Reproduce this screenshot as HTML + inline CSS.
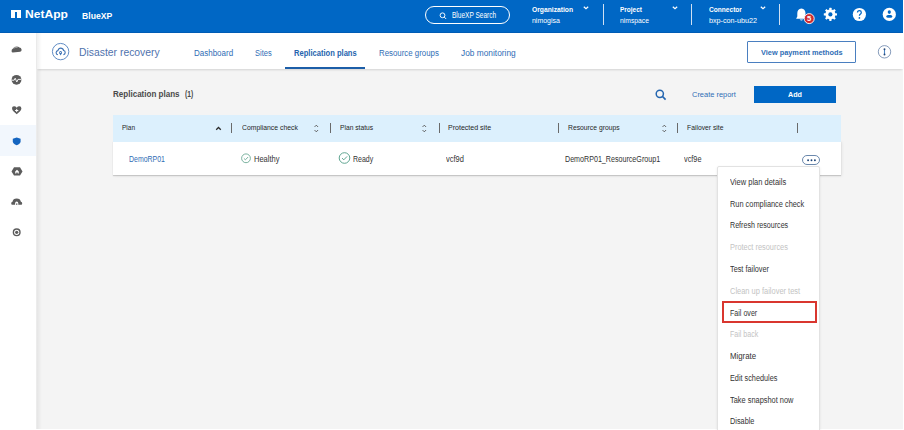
<!DOCTYPE html>
<html><head><meta charset="utf-8">
<style>
*{box-sizing:border-box;margin:0;padding:0}
html,body{width:904px;height:430px;overflow:hidden;background:#f4f4f4;font-family:"Liberation Sans",sans-serif;color:#333}
.a{position:absolute}
.t{position:absolute;white-space:nowrap;line-height:1;transform-origin:0 0}
.r{}
</style></head><body>
<!-- header -->
<div class="a" style="left:0;top:0;width:903px;height:33px;background:#0067c5;border-bottom:1px solid #005cb5"></div>
<div class="a" style="left:903px;top:0;width:1px;height:430px;background:#fff"></div>
<!-- logo -->
<div class="a" style="left:11px;top:10px;width:10px;height:8px;background:#fff"></div>
<div class="a" style="left:14.7px;top:12.4px;width:2.5px;height:6px;background:#0067c5"></div>
<!-- search pill -->
<div class="a" style="left:425px;top:6px;width:85px;height:18px;border:1px solid #fff;border-radius:9px"></div>
<svg class="a" style="left:439px;top:12px" width="9" height="9" viewBox="0 0 9 9"><circle cx="3.5" cy="3.3" r="2.4" fill="none" stroke="#fff" stroke-width="0.95"/><path d="M5.2 5 L7.2 7" stroke="#fff" stroke-width="0.95"/></svg>
<!-- chevrons/dividers -->
<svg class="a" style="left:583px;top:6px" width="6" height="4" viewBox="0 0 6 4"><path d="M0.8 0.8 L3 2.8 L5.2 0.8" fill="none" stroke="#fff" stroke-width="1.2"/></svg>
<div class="a" style="left:603px;top:4px;width:1px;height:21px;background:#cfe0f3"></div>
<svg class="a" style="left:672px;top:6px" width="6" height="4" viewBox="0 0 6 4"><path d="M0.8 0.8 L3 2.8 L5.2 0.8" fill="none" stroke="#fff" stroke-width="1.2"/></svg>
<div class="a" style="left:691px;top:4px;width:1px;height:21px;background:#cfe0f3"></div>
<svg class="a" style="left:760px;top:6px" width="6" height="4" viewBox="0 0 6 4"><path d="M0.8 0.8 L3 2.8 L5.2 0.8" fill="none" stroke="#fff" stroke-width="1.2"/></svg>
<div class="a" style="left:779px;top:4px;width:1px;height:21px;background:#cfe0f3"></div>
<!-- bell -->
<svg class="a" style="left:795px;top:7px" width="21" height="18" viewBox="0 0 21 18">
<path d="M6.4 1.4 C3.6 1.4 2.3 3.6 2.3 6.2 L2.3 9.4 L1.1 11.8 L11.7 11.8 L10.5 9.4 L10.5 6.2 C10.5 3.6 9.2 1.4 6.4 1.4 Z" fill="#fff"/>
<path d="M4.6 12.4 Q6.4 14.6 8.2 12.4 Z" fill="#fff"/>
<circle cx="14.2" cy="11.6" r="5" fill="#cf2b2f" stroke="#fff" stroke-width="0.9"/>
<text x="14.2" y="14.4" font-size="7.6" font-weight="bold" fill="#fff" text-anchor="middle" font-family="Liberation Sans">5</text>
</svg>
<!-- gear -->
<svg class="a" style="left:822px;top:6px" width="17" height="17" viewBox="0 0 17 17">
<g fill="#fff" transform="translate(8.4 8.4)">
<circle r="5"/>
<rect x="-1.15" y="-6.6" width="2.3" height="13.2" rx="0.4"/>
<rect x="-1.15" y="-6.6" width="2.3" height="13.2" rx="0.4" transform="rotate(45)"/>
<rect x="-1.15" y="-6.6" width="2.3" height="13.2" rx="0.4" transform="rotate(90)"/>
<rect x="-1.15" y="-6.6" width="2.3" height="13.2" rx="0.4" transform="rotate(135)"/>
<circle r="2.1" fill="#0067c5"/>
</g>
</svg>
<!-- help -->
<svg class="a" style="left:852px;top:7px" width="15" height="15" viewBox="0 0 15 15">
<circle cx="7.4" cy="7.5" r="6.6" fill="#fff"/>
<path d="M5.5 5.6 Q5.5 3.6 7.4 3.6 Q9.3 3.6 9.3 5.4 Q9.3 6.5 8.3 7.1 Q7.4 7.6 7.4 8.8" fill="none" stroke="#0067c5" stroke-width="1.25"/>
<circle cx="7.4" cy="10.9" r="0.85" fill="#0067c5"/>
</svg>
<!-- user -->
<svg class="a" style="left:882px;top:7px" width="15" height="15" viewBox="0 0 15 15">
<circle cx="7.3" cy="7.4" r="6.6" fill="#fff"/>
<ellipse cx="7.3" cy="5.1" rx="1.6" ry="1.8" fill="#0067c5"/>
<path d="M4.3 9.6 Q4.3 8 6 8 L8.6 8 Q10.3 8 10.3 9.6 Q10.3 10.8 8.6 10.8 L6 10.8 Q4.3 10.8 4.3 9.6 Z" fill="#0067c5"/>
</svg>

<!-- sidebar -->
<div class="a" style="left:0;top:33px;width:37px;height:397px;background:#fff;border-right:1px solid #ececec"></div>
<div class="a" style="left:0;top:125px;width:36px;height:31px;background:#f2f7fd"></div>

<!-- subheader -->
<div class="a" style="left:37px;top:33px;width:866px;height:36px;background:#fff;box-shadow:0 2px 2px -1px rgba(0,0,0,.14)"></div>
<svg class="a" style="left:48px;top:40px" width="25" height="24" viewBox="0 0 25 24">
<circle cx="12.6" cy="11.6" r="8.2" fill="none" stroke="#4f7fbd" stroke-width="0.9"/>
<path d="M9.9 14.8 Q8 14.4 8.1 12.5 Q8.3 10.8 9.9 10.6 Q10.6 8.1 12.7 8.1 Q15 8.1 15.6 10.5 Q17.3 10.8 17.2 12.6 Q17.1 14.3 15.4 14.8" fill="none" stroke="#3f73b5" stroke-width="1.1"/>
<path d="M12.6 15.6 L11.3 13.2 A1.45 1.45 0 1 1 13.9 13.2 Z" fill="#3f73b5"/>
<circle cx="12.6" cy="12.5" r="0.6" fill="#fff"/>
</svg>
<div class="a" style="left:285px;top:67px;width:80px;height:2px;background:#1c5ea8"></div>
<div class="a" style="left:747px;top:41px;width:109px;height:22px;border:1px solid #4a7fc0;border-radius:1px"></div>
<svg class="a" style="left:877px;top:44px" width="15" height="15" viewBox="0 0 15 15">
<circle cx="7.5" cy="7.8" r="6.2" fill="none" stroke="#6f89ad" stroke-width="0.85"/>
<path d="M7.5 5.3 L7.5 10.4" stroke="#4d86c6" stroke-width="1.1"/>
<circle cx="7.5" cy="5.2" r="0.95" fill="#25487a"/><circle cx="7.5" cy="10.5" r="0.95" fill="#25487a"/>
</svg>

<div class="a" style="left:37px;top:33px;width:5px;height:396px;background:linear-gradient(to right,rgba(0,0,0,.06),rgba(0,0,0,0))"></div>
<div class="a" style="left:0;top:429px;width:904px;height:1px;background:#fff"></div>
<!-- sidebar icons -->
<svg class="a" style="left:0;top:0" width="36" height="250" viewBox="0 0 36 250">
<g fill="#5c5c5c">
<path d="M11.6 51.6 Q11.2 49.6 13 48.6 Q14 46.6 16.6 46.6 Q18.4 46.6 19.4 47.6 Q21.2 47.8 21.6 49.4 Q21.8 51.2 20.2 51.8 L12.8 52.6 Q11.8 52.6 11.6 51.6 Z"/>
<path d="M13.6 48.2 Q15.6 46.9 17.6 47.3" fill="none" stroke="#fff" stroke-width="0.5"/>
<circle cx="16.5" cy="79.8" r="4.9"/>
<path d="M12 108 Q12.1 106.4 13.9 106.3 Q15.6 106.2 16.7 107.7 Q17.8 106.2 19.5 106.3 Q21.3 106.4 21.4 108.4 Q21.4 110 19.8 111.5 L16.7 114.3 L13.6 111.5 Q12 110 12 108 Z"/>
<path d="M16.6 2 L21.5 3.6 L21.5 7 Q21.5 10.8 16.6 12.6 Q11.7 10.8 11.7 7 L11.7 3.6 Z" fill="#1565c0" transform="translate(0.2 0) scale(1 1)" style="display:none"/>
<path d="M14 167.2 L20 167.2 L22.5 171.4 L20 175.6 L14 175.6 L11.5 171.4 Z"/>
<path d="M12.2 204.8 Q11.2 204.8 11.2 203.3 Q11.2 201.9 12.5 201.8 Q12.9 198.4 16.7 198.4 Q20.4 198.4 20.9 201.8 Q22.2 201.9 22.2 203.3 Q22.2 204.8 21.2 204.8 Z"/>
<circle cx="16.7" cy="232.3" r="3.3" fill="none" stroke="#5c5c5c" stroke-width="1.4"/>
<circle cx="16.7" cy="232.3" r="1.6"/>
</g>
<path d="M11.8 80.2 L14.2 80.2 L15.2 78.2 L16.8 82 L18 79.4 L21.2 79.4" fill="none" stroke="#fff" stroke-width="0.9"/>
<path d="M16.7 108.9 L16.7 112.1 M15.1 110.5 L18.3 110.5" stroke="#fff" stroke-width="1"/>
<path d="M16.7 137.4 L20.6 138.7 L20.6 141.2 Q20.6 143.9 16.7 145.3 Q12.8 143.9 12.8 141.2 L12.8 138.7 Z" fill="#1565c0"/>
<path d="M15.2 173.6 L15.2 171.4 L17 169.8 L18.8 171.4 L18.8 173.6 L17.7 173.6 L17.7 172.4 L16.3 172.4 L16.3 173.6 Z" fill="#fff"/>
<path d="M15.1 205.2 L15.1 203.2 Q15.1 201.6 16.7 201.6 Q18.3 201.6 18.3 203.2 L18.3 205.2 L17.4 205.2 L17.4 203.4 L16 203.4 L16 205.2 Z" fill="#fff"/>
</svg>
<!-- content -->
<svg class="a" style="left:655px;top:89px" width="12" height="12" viewBox="0 0 12 12">
<circle cx="4.8" cy="4.8" r="3.6" fill="none" stroke="#2466b0" stroke-width="1.5"/>
<path d="M7.4 7.4 L10.6 10.6" stroke="#2466b0" stroke-width="1.6"/>
</svg>
<div class="a" style="left:754px;top:86px;width:82px;height:17px;background:#0067c5"></div>

<!-- table -->
<div class="a" style="left:113px;top:141px;width:728px;height:34px;background:#fff;box-shadow:0 1px 1px rgba(0,0,0,.15),1px 1px 3px rgba(0,0,0,.07)"></div>
<div class="a" style="left:113px;top:115px;width:728px;height:27px;background:#dcf0fd"></div>
<svg class="a" style="left:215px;top:126px" width="7" height="5" viewBox="0 0 7 5"><path d="M1.2 3.7 L3.5 1.5 L5.8 3.7" fill="none" stroke="#2a2a2a" stroke-width="1.3"/></svg>
<div class="a" style="left:231px;top:123px;width:1px;height:10px;background:#6a6a6a"></div>
<svg class="a" style="left:314px;top:124px" width="5" height="9" viewBox="0 0 5 9"><path d="M0.6 2.9 L2.3 1.2 L4 2.9 M0.6 6.1 L2.3 7.8 L4 6.1" fill="none" stroke="#5a5a5a" stroke-width="1"/></svg>
<div class="a" style="left:330px;top:123px;width:1px;height:10px;background:#6a6a6a"></div>
<svg class="a" style="left:422px;top:124px" width="5" height="9" viewBox="0 0 5 9"><path d="M0.6 2.9 L2.3 1.2 L4 2.9 M0.6 6.1 L2.3 7.8 L4 6.1" fill="none" stroke="#5a5a5a" stroke-width="1"/></svg>
<div class="a" style="left:439px;top:123px;width:1px;height:10px;background:#6a6a6a"></div>
<div class="a" style="left:558px;top:123px;width:1px;height:10px;background:#6a6a6a"></div>
<svg class="a" style="left:662px;top:124px" width="5" height="9" viewBox="0 0 5 9"><path d="M0.6 2.9 L2.3 1.2 L4 2.9 M0.6 6.1 L2.3 7.8 L4 6.1" fill="none" stroke="#5a5a5a" stroke-width="1"/></svg>
<div class="a" style="left:677px;top:123px;width:1px;height:10px;background:#6a6a6a"></div>
<div class="a" style="left:797px;top:123px;width:1px;height:10px;background:#6a6a6a"></div>

<svg class="a" style="left:240px;top:152px" width="12" height="12" viewBox="0 0 12 12"><circle cx="6" cy="6.3" r="4.4" fill="none" stroke="#5a9f88" stroke-width="0.8"/><path d="M3.9 6.4 L5.4 7.8 L8.1 5" fill="none" stroke="#5a9f88" stroke-width="0.8"/></svg>
<svg class="a" style="left:338px;top:151px" width="13" height="13" viewBox="0 0 13 13"><circle cx="6.5" cy="7" r="5.3" fill="none" stroke="#4f9c86" stroke-width="0.9"/><path d="M4 7.1 L5.8 8.8 L9.1 5.4" fill="none" stroke="#4f9c86" stroke-width="0.9"/></svg>
<svg class="a" style="left:801px;top:154px" width="20" height="12" viewBox="0 0 20 12">
<rect x="1.5" y="1.5" width="17" height="9" rx="4.5" fill="#fff" stroke="#5a7aa3" stroke-width="0.9"/>
<circle cx="7.1" cy="6.2" r="0.95" fill="#1d4478"/><circle cx="10.5" cy="6.2" r="0.95" fill="#1d4478"/><circle cx="13.9" cy="6.2" r="0.95" fill="#1d4478"/>
</svg>
<!-- menu -->
<div class="a" style="left:717px;top:166px;width:103px;height:270px;background:#fff;border:1px solid #e2e2e2;border-radius:2px;box-shadow:0 1px 3px rgba(0,0,0,.08)"></div>
<div class="a" style="left:722px;top:301px;width:95px;height:22px;border:2px solid #d9362f"></div>
<div class="t" style="left:24.60px;top:9px;font-size:11.5px;font-weight:bold;transform:scaleX(1.0493);color:#fff;">NetApp</div>
<div class="t" style="left:81.70px;top:11px;font-size:9.4px;font-weight:bold;transform:scaleX(0.9210);color:#fff;">BlueXP</div>
<div class="t r" style="left:451.70px;top:12px;font-size:8.2px;transform:scaleX(0.7968);color:#fff;">BlueXP Search</div>
<div class="t" style="left:531.90px;top:6px;font-size:8px;font-weight:bold;transform:scaleX(0.8388);color:#fff;">Organization</div>
<div class="t r" style="left:531.90px;top:17px;font-size:7.8px;transform:scaleX(0.8931);color:#fff;">nimogisa</div>
<div class="t" style="left:620.10px;top:6px;font-size:8px;font-weight:bold;transform:scaleX(0.8075);color:#fff;">Project</div>
<div class="t r" style="left:620.10px;top:17px;font-size:7.8px;transform:scaleX(0.8657);color:#fff;">nimspace</div>
<div class="t" style="left:708.50px;top:6px;font-size:8px;font-weight:bold;transform:scaleX(0.8225);color:#fff;">Connector</div>
<div class="t r" style="left:708.50px;top:17px;font-size:7.8px;transform:scaleX(0.9207);color:#fff;">bxp-con-ubu22</div>
<div class="t r" style="left:79.00px;top:47px;font-size:11.5px;transform:scaleX(0.9020);color:#4f72ad;">Disaster recovery</div>
<div class="t r" style="left:194.00px;top:49px;font-size:8.3px;transform:scaleX(0.9634);color:#2f6db5;">Dashboard</div>
<div class="t r" style="left:255.00px;top:49px;font-size:8.3px;transform:scaleX(0.9043);color:#2f6db5;">Sites</div>
<div class="t" style="left:294.00px;top:49px;font-size:8.3px;font-weight:bold;transform:scaleX(0.9123);color:#2463ad;">Replication plans</div>
<div class="t r" style="left:378.85px;top:49px;font-size:8.3px;transform:scaleX(0.9469);color:#2f6db5;">Resource groups</div>
<div class="t r" style="left:460.80px;top:49px;font-size:8.3px;transform:scaleX(1.0046);color:#2f6db5;">Job monitoring</div>
<div class="t" style="left:761.10px;top:49px;font-size:8px;font-weight:bold;transform:scaleX(0.9193);color:#2f6db5;">View payment methods</div>
<div class="t" style="left:113.00px;top:90px;font-size:8.7px;font-weight:bold;transform:scaleX(0.9259);color:#4a4a4a;">Replication plans</div>
<div class="t" style="left:184.50px;top:90px;font-size:8.7px;font-weight:bold;transform:scaleX(0.7726);color:#4a4a4a;">(1)</div>
<div class="t r" style="left:691.80px;top:91px;font-size:8px;transform:scaleX(0.9317);color:#2f6db5;">Create report</div>
<div class="t" style="left:788.30px;top:91px;font-size:8px;font-weight:bold;transform:scaleX(0.8997);color:#fff;">Add</div>
<div class="t r" style="left:122.00px;top:124px;font-size:7.9px;transform:scaleX(0.8228);color:#262626;">Plan</div>
<div class="t r" style="left:241.75px;top:124px;font-size:7.9px;transform:scaleX(0.8663);color:#262626;">Compliance check</div>
<div class="t r" style="left:339.65px;top:124px;font-size:7.9px;transform:scaleX(0.8486);color:#262626;">Plan status</div>
<div class="t r" style="left:448.00px;top:124px;font-size:7.9px;transform:scaleX(0.8922);color:#262626;">Protected site</div>
<div class="t r" style="left:568.00px;top:124px;font-size:7.9px;transform:scaleX(0.8594);color:#262626;">Resource groups</div>
<div class="t r" style="left:687.30px;top:124px;font-size:7.9px;transform:scaleX(0.8572);color:#262626;">Failover site</div>
<div class="t r" style="left:129.00px;top:155px;font-size:8.4px;transform:scaleX(0.8290);color:#2f6db5;">DemoRP01</div>
<div class="t r" style="left:253.90px;top:155px;font-size:8.4px;transform:scaleX(0.8990);color:#333;">Healthy</div>
<div class="t r" style="left:352.90px;top:155px;font-size:8.4px;transform:scaleX(0.8362);color:#333;">Ready</div>
<div class="t r" style="left:446.00px;top:155px;font-size:8.4px;transform:scaleX(0.8966);color:#333;">vcf9d</div>
<div class="t r" style="left:565.00px;top:155px;font-size:8.4px;transform:scaleX(0.8514);color:#333;">DemoRP01_ResourceGroup1</div>
<div class="t r" style="left:683.65px;top:155px;font-size:8.4px;transform:scaleX(0.8742);color:#333;">vcf9e</div>
<div class="t r" style="left:729.70px;top:178px;font-size:8.3px;transform:scaleX(0.9046);color:#333;">View plan details</div>
<div class="t r" style="left:729.70px;top:200px;font-size:8.3px;transform:scaleX(0.8894);color:#333;">Run compliance check</div>
<div class="t r" style="left:729.70px;top:221px;font-size:8.3px;transform:scaleX(0.8583);color:#333;">Refresh resources</div>
<div class="t r" style="left:729.70px;top:243px;font-size:8.3px;transform:scaleX(0.8904);color:#c3c3c3;">Protect resources</div>
<div class="t r" style="left:729.70px;top:265px;font-size:8.3px;transform:scaleX(0.8807);color:#333;">Test failover</div>
<div class="t r" style="left:729.70px;top:287px;font-size:8.3px;transform:scaleX(0.9002);color:#c3c3c3;">Clean up failover test</div>
<div class="t r" style="left:729.70px;top:309px;font-size:8.3px;transform:scaleX(0.8545);color:#333;">Fail over</div>
<div class="t r" style="left:729.70px;top:330px;font-size:8.3px;transform:scaleX(0.8513);color:#c3c3c3;">Fail back</div>
<div class="t r" style="left:729.70px;top:352px;font-size:8.3px;transform:scaleX(0.9429);color:#333;">Migrate</div>
<div class="t r" style="left:729.70px;top:374px;font-size:8.3px;transform:scaleX(0.8779);color:#333;">Edit schedules</div>
<div class="t r" style="left:729.70px;top:396px;font-size:8.3px;transform:scaleX(0.8932);color:#333;">Take snapshot now</div>
<div class="t r" style="left:729.70px;top:417px;font-size:8.3px;transform:scaleX(0.8815);color:#333;">Disable</div>

</body></html>
